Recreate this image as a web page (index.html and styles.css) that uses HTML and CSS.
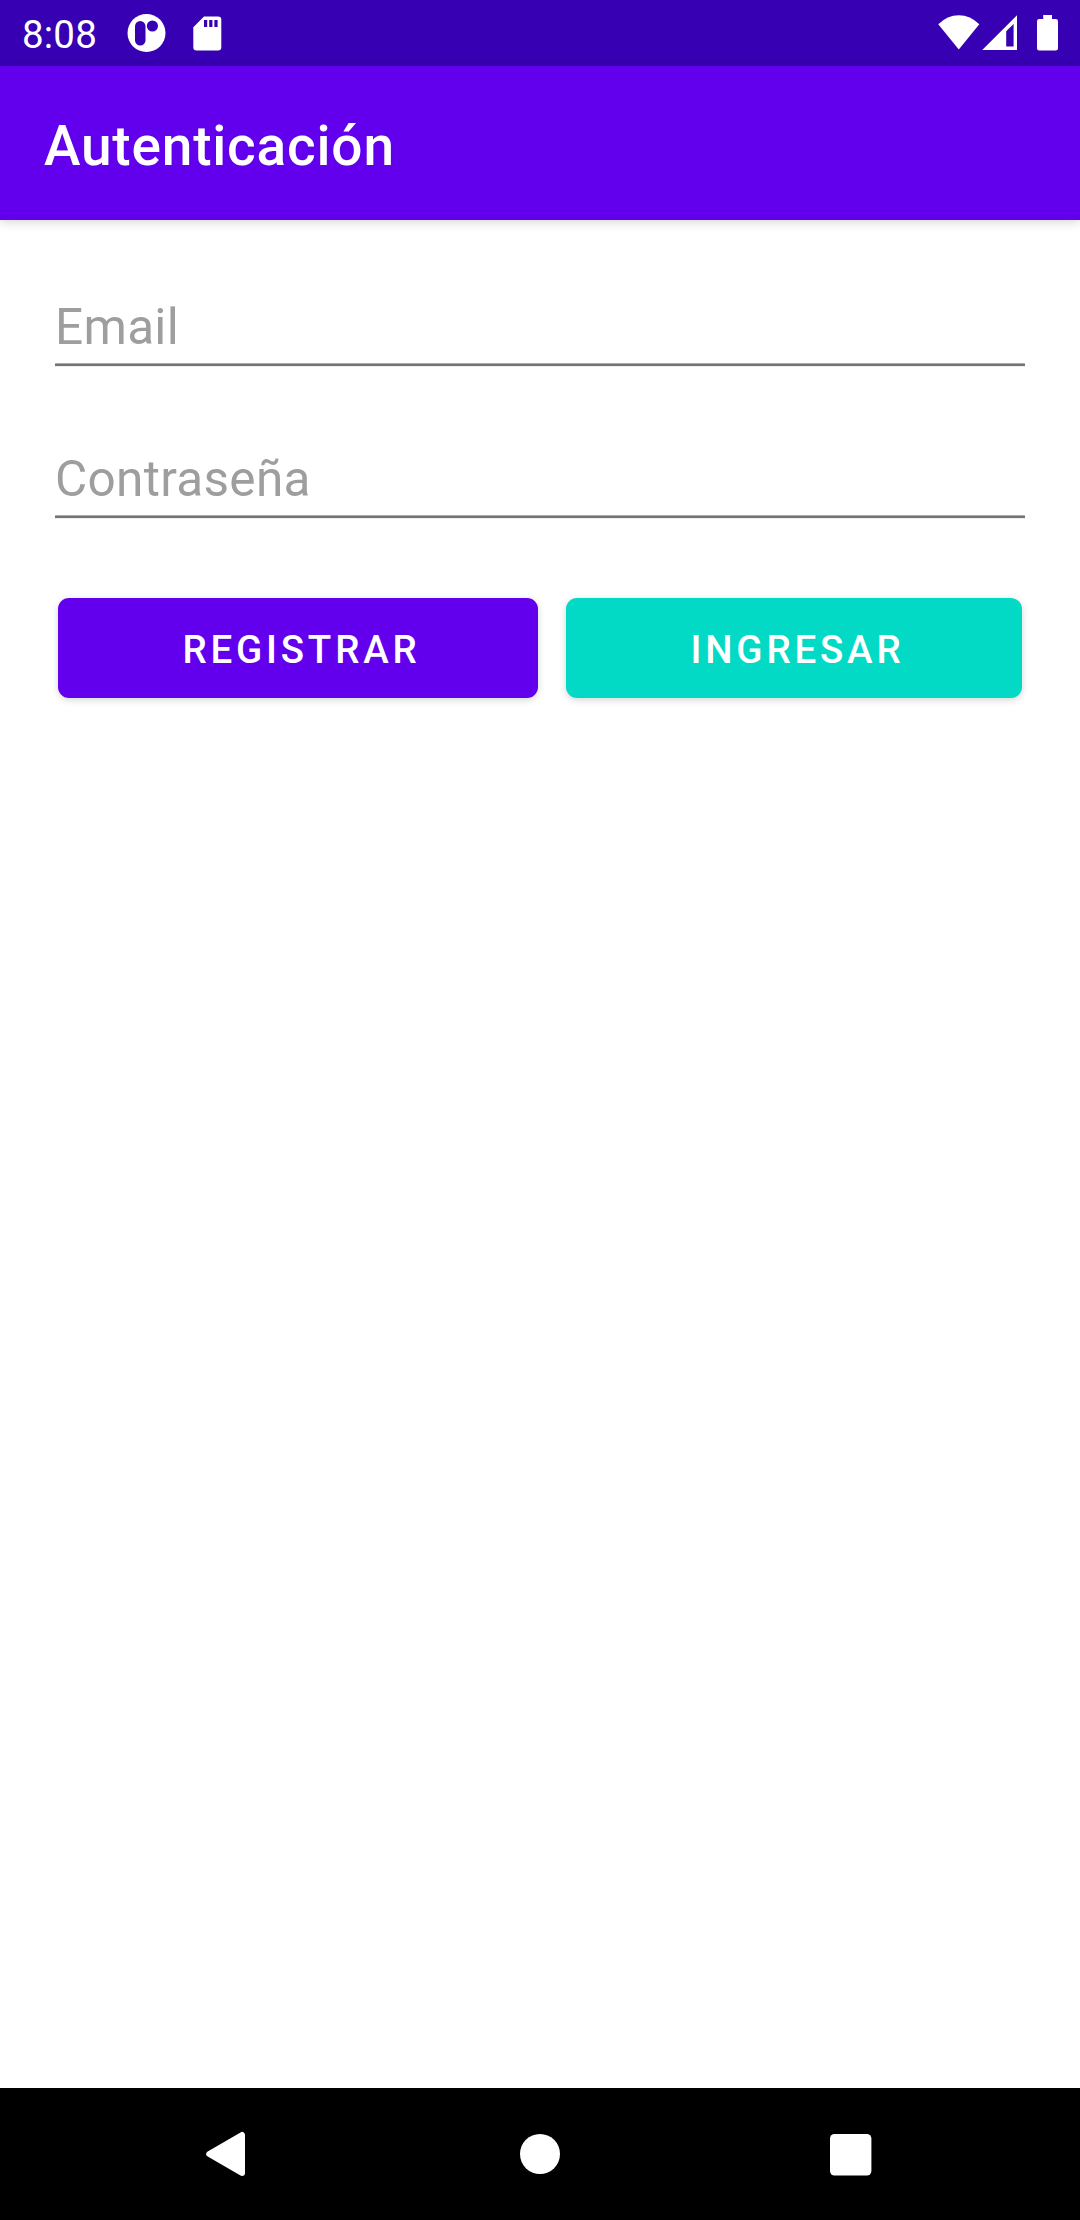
FILE: index.html
```html
<!DOCTYPE html>
<html lang="es">
<head>
<meta charset="utf-8">
<title>Autenticación</title>
<link rel="stylesheet" href="styles.css">
</head>
<body>
<div class="screen">
  <div class="status-bar">
    <span class="clock">8:08</span>
    <svg class="icon-app" width="39" height="40" viewBox="0 0 39 40">
      <circle cx="19.5" cy="20" r="19" fill="#fff"/>
      <rect x="8" y="8" width="10.5" height="24.5" rx="5.2" fill="#3700b3"/>
      <circle cx="25.4" cy="13" r="5.6" fill="#3700b3"/>
    </svg>
    <svg class="icon-card" width="29" height="36" viewBox="0 0 29 36">
      <path fill="#fff" fill-rule="evenodd" d="M11 .5H25Q28.3 .5 28.3 3.8V31.2Q28.3 34.5 25 34.5H3.6Q.3 34.5 .3 31.2V11.2ZM11 4V11H14.2V4ZM16.2 4V11H19.4V4ZM21.4 4V11H24.6V4Z"/>
    </svg>
    <div class="status-right">
      <svg width="42" height="36" viewBox="0 0 42 36"><path fill="#fff" d="M.3 9.3Q9.3 .3 20.8 .3T41.3 9.3L20.8 34.6Z"/></svg>
      <svg class="icon-signal" width="36" height="36" viewBox="0 0 36 36"><path fill="#fff" fill-rule="evenodd" d="M35 .2V35H.2ZM24.2 16.2V31.4H31.6V9Z"/></svg>
      <svg class="icon-battery" width="22" height="36" viewBox="0 0 22 36"><path fill="#fff" d="M6.2 0H15V4H18.8Q21 4 21 6.2V33.3Q21 35.6 18.8 35.6H2.3Q0 35.6 0 33.3V6.2Q0 4 2.3 4H6.2Z"/></svg>
    </div>
  </div>
  <header class="app-bar"><h1 class="title">Autenticación</h1></header>
  <main class="content">
    <div class="field"><label class="hint">Email</label></div>
    <div class="field"><label class="hint">Contraseña</label></div>
    <div class="actions">
      <button class="btn btn-register">REGISTRAR</button>
      <button class="btn btn-login">INGRESAR</button>
    </div>
  </main>
  <nav class="nav-bar">
    <svg width="40" height="46" viewBox="0 0 40 46"><path fill="#fff" stroke="#fff" stroke-width="6" stroke-linejoin="round" d="M37 4V42L4.2 23Z"/></svg>
    <svg class="nav-home" width="40" height="40" viewBox="0 0 40 40"><circle cx="20" cy="20" r="20" fill="#fff"/></svg>
    <svg class="nav-recents" width="42" height="42" viewBox="0 0 42 42"><rect width="41.4" height="41.5" rx="4.5" fill="#fff"/></svg>
  </nav>
</div>
</body>
</html>
```
FILE: styles.css
```css
* { box-sizing: border-box; }
body {
  margin: 0;
  font-family: Roboto, "Liberation Sans", sans-serif;
  background: #fff;
}
svg { display: block; flex: none; }
.screen {
  width: 1080px;
  height: 2220px;
  display: flex;
  flex-direction: column;
}
.status-bar {
  height: 66px;
  flex: none;
  display: flex;
  align-items: flex-start;
  padding: 0 21px 0 22px;
  background: #3700b3;
  color: #fff;
}
.clock {
  width: 105px;
  padding-top: 12px;
  font-size: 38.5px;
  line-height: 45px;
  letter-spacing: .2px;
}
.icon-app { margin-top: 13px; }
.icon-card { margin: 16px 0 0 27px; }
.status-right {
  display: flex;
  margin: 15px 0 0 auto;
}
.icon-signal { margin-left: 2px; }
.icon-battery { margin-left: 19px; }
.app-bar {
  height: 154px;
  flex: none;
  display: flex;
  align-items: center;
  padding: 6px 44px 0;
  background: #6200ee;
  color: #fff;
  box-shadow: 0 2px 10px rgba(0, 0, 0, .17);
}
.title {
  margin: 0;
  font-size: 55px;
  font-weight: 500;
  line-height: 64px;
  letter-spacing: .8px;
}
.content {
  flex: 1;
  padding: 78px 55px 0;
}
.field {
  height: 69px;
  margin-bottom: 83px;
  background: linear-gradient(#a9a9a9 1px, #757575 1px, #757575 3px, #eee 3px) bottom / 100% 4px no-repeat;
}
.hint {
  display: block;
  font-size: 49.5px;
  line-height: 58px;
  letter-spacing: .3px;
  color: #9e9e9e;
}
.actions {
  display: flex;
  gap: 28px;
  padding: 0 3px;
  margin-top: -4px;
}
.btn {
  height: 100px;
  border: 0;
  border-radius: 11px;
  padding: 2px 0 0 7px;
  font-family: inherit;
  font-size: 38.5px;
  font-weight: 500;
  letter-spacing: 3.8px;
  color: #fff;
  box-shadow: 0 2px 7px rgba(0, 0, 0, .17);
}
.btn-register { width: 480px; background: #6200ee; }
.btn-login { width: 456px; background: #03dac5; }
.nav-bar {
  height: 132px;
  flex: none;
  display: flex;
  align-items: center;
  padding-left: 205px;
  background: #000;
}
.nav-home { margin-left: 275px; }
.nav-recents { margin: 2px 0 0 270px; }
```
